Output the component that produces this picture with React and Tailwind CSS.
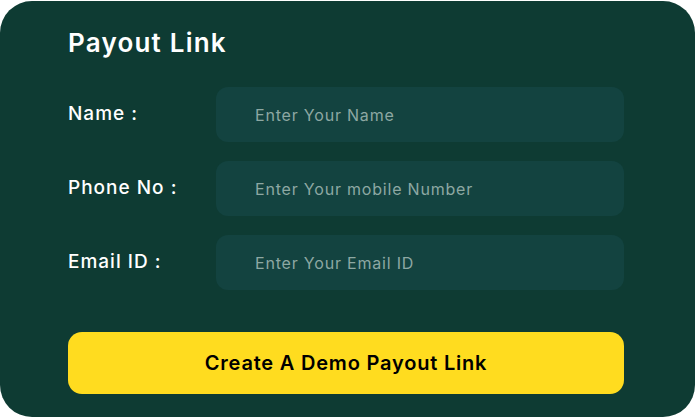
export default function App() {
  const rows = [
    ["Name :", "Enter Your Name"],
    ["Phone No :", "Enter Your mobile Number"],
    ["Email ID :", "Enter Your Email ID"],
  ];
  return (
    <div className="w-[696px] h-[418px] bg-white pt-[1px]" style={{ fontFamily: "Inter, 'Open Sans', sans-serif" }}>
      <div className="w-[695px] h-[416px] rounded-[32px] bg-[#0e3b33] pl-[68px] pr-[71px] pt-[26px] flex flex-col">
        <h1 className="text-white text-[26px] font-semibold leading-[32px] tracking-[1.2px]">Payout Link</h1>
        <div className="mt-[28px] flex flex-col gap-[19px]">
          {rows.map(([label, ph]) => (
            <div key={label} className="flex items-center">
              <div className="w-[148px] text-white text-[19px] font-medium tracking-[1px]">{label}</div>
              <div className="flex-1 h-[55px] rounded-[12px] bg-[#134340] flex items-center pl-[39px] text-[16px] text-[#8da8a3] tracking-[0.8px]">
                {ph}
              </div>
            </div>
          ))}
        </div>
        <button className="mt-[42px] h-[62px] w-full rounded-[14px] bg-[#ffdc1f] text-black text-[20px] font-semibold tracking-[0.8px]">
          Create A Demo Payout Link
        </button>
      </div>
    </div>
  );
}
